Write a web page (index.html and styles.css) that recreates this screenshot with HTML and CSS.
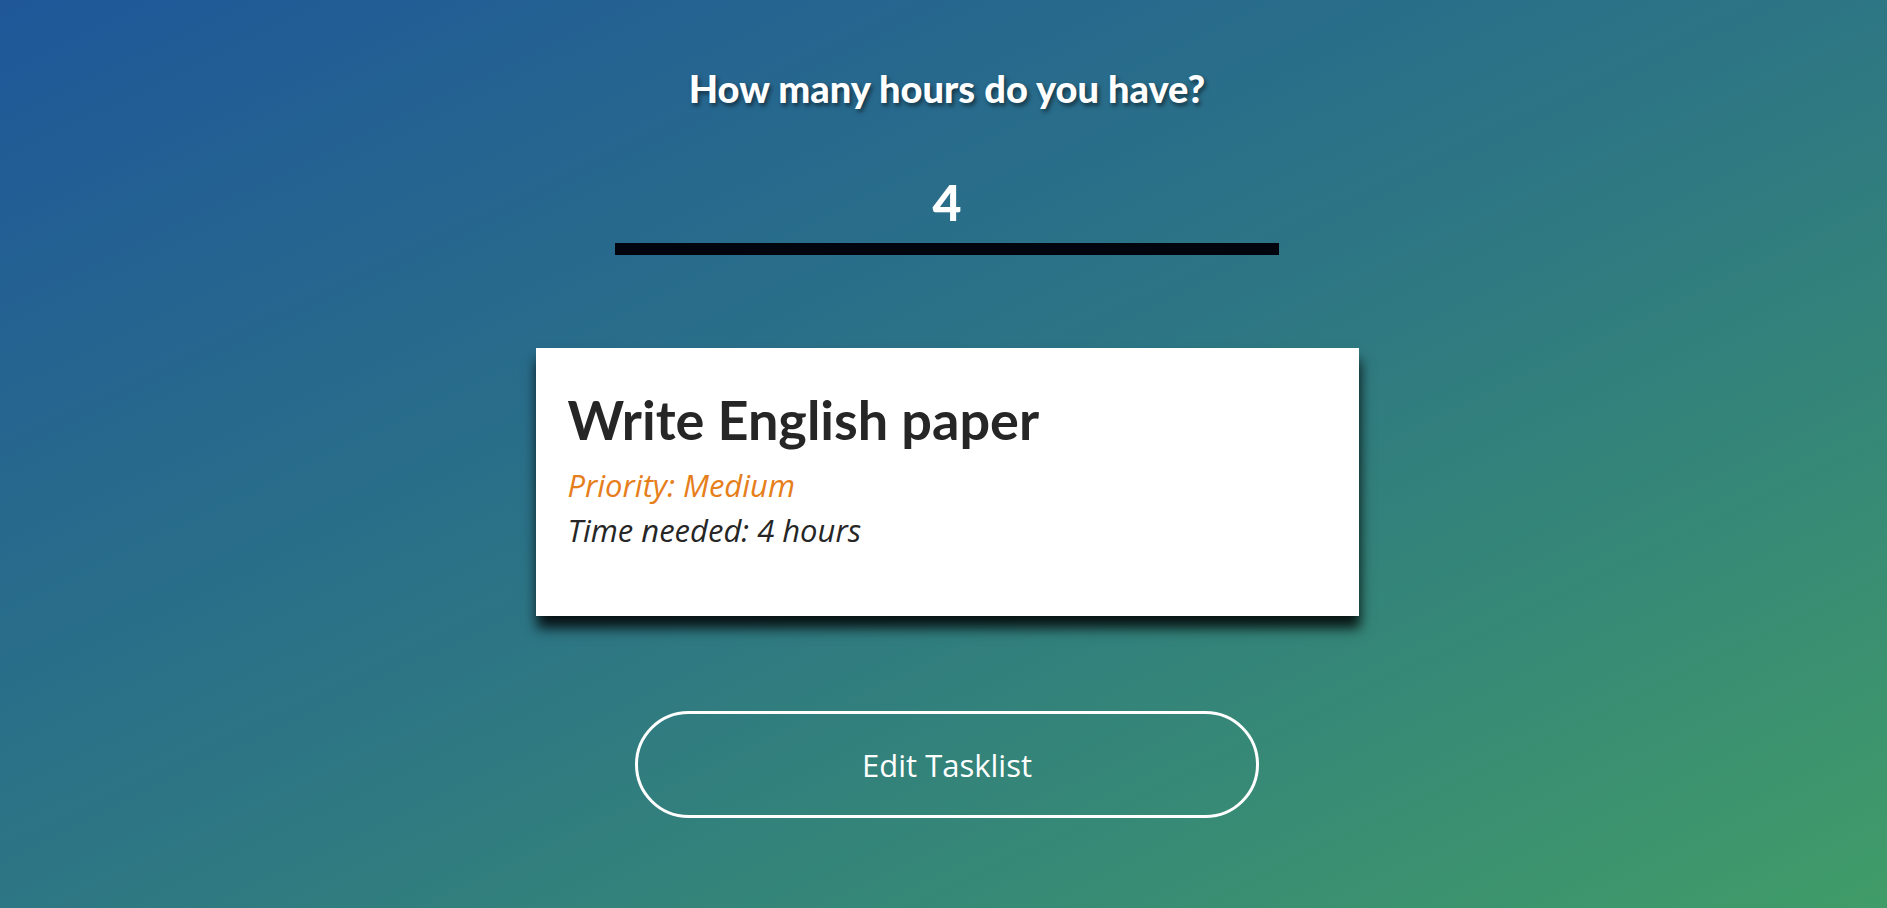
FILE: index.html
```html
<!DOCTYPE html>
<html lang="en">
<head>
<meta charset="utf-8">
<title>Tasklist</title>
<link rel="stylesheet" href="styles.css">
</head>
<body>
<main class="page">
  <h1 class="question">How many hours do you have?</h1>
  <input class="hours-input" type="text" value="4">
  <section class="task-card">
    <h2 class="task-title">Write English paper</h2>
    <p class="task-priority">Priority: Medium</p>
    <p class="task-time">Time needed: 4 hours</p>
  </section>
  <button class="edit-btn" type="button">Edit Tasklist</button>
</main>
</body>
</html>
```

FILE: styles.css
```css
html, body {
  margin: 0;
  padding: 0;
}
body {
  min-height: 908px;
  background: linear-gradient(to bottom right, #1f5799 0%, #2d7684 50%, #409c68 100%);
  font-family: "Lato", "Open Sans", sans-serif;
  color: #fff;
}
.page {
  display: flex;
  flex-direction: column;
  align-items: center;
  padding: 65px 0 0 7px;
  box-sizing: border-box;
  min-height: 908px;
}
.question {
  margin: 0;
  font-size: 38px;
  line-height: 46px;
  font-weight: 900;
  color: #fff;
  text-shadow: 2px 3px 4px rgba(0, 0, 0, 0.5);
}
.hours-input {
  display: block;
  margin: 62px 0 0;
  width: 664px;
  height: 58px;
  padding: 0 0 12px;
  border: 0;
  border-bottom: 12px solid #02040e;
  background: transparent;
  color: #fff;
  font-family: "Lato", sans-serif;
  font-weight: 900;
  font-size: 50px;
  line-height: 58px;
  text-align: center;
  outline: none;
  box-sizing: content-box;
}
.task-card {
  margin-top: 93px;
  width: 823px;
  height: 268px;
  box-sizing: border-box;
  padding: 40px 32px 0;
  background: #fff;
  box-shadow: 1px 12px 12px rgba(0, 0, 0, 0.85);
  color: #262626;
}
.task-title {
  margin: 0 0 11px;
  font-size: 54px;
  line-height: 64px;
  font-weight: 700;
}
.task-priority,
.task-time {
  margin: 0;
  font-family: "Open Sans", sans-serif;
  font-size: 31px;
  line-height: 45px;
  font-style: italic;
  font-weight: 500;
}
.task-priority {
  color: #e67e1c;
}
.task-time {
  color: #262626;
}
.edit-btn {
  margin-top: 95px;
  width: 624px;
  height: 107px;
  border: 3px solid #fff;
  border-radius: 54px;
  background: transparent;
  color: #fff;
  font-family: "Open Sans", sans-serif;
  font-size: 31px;
  cursor: pointer;
}
```
